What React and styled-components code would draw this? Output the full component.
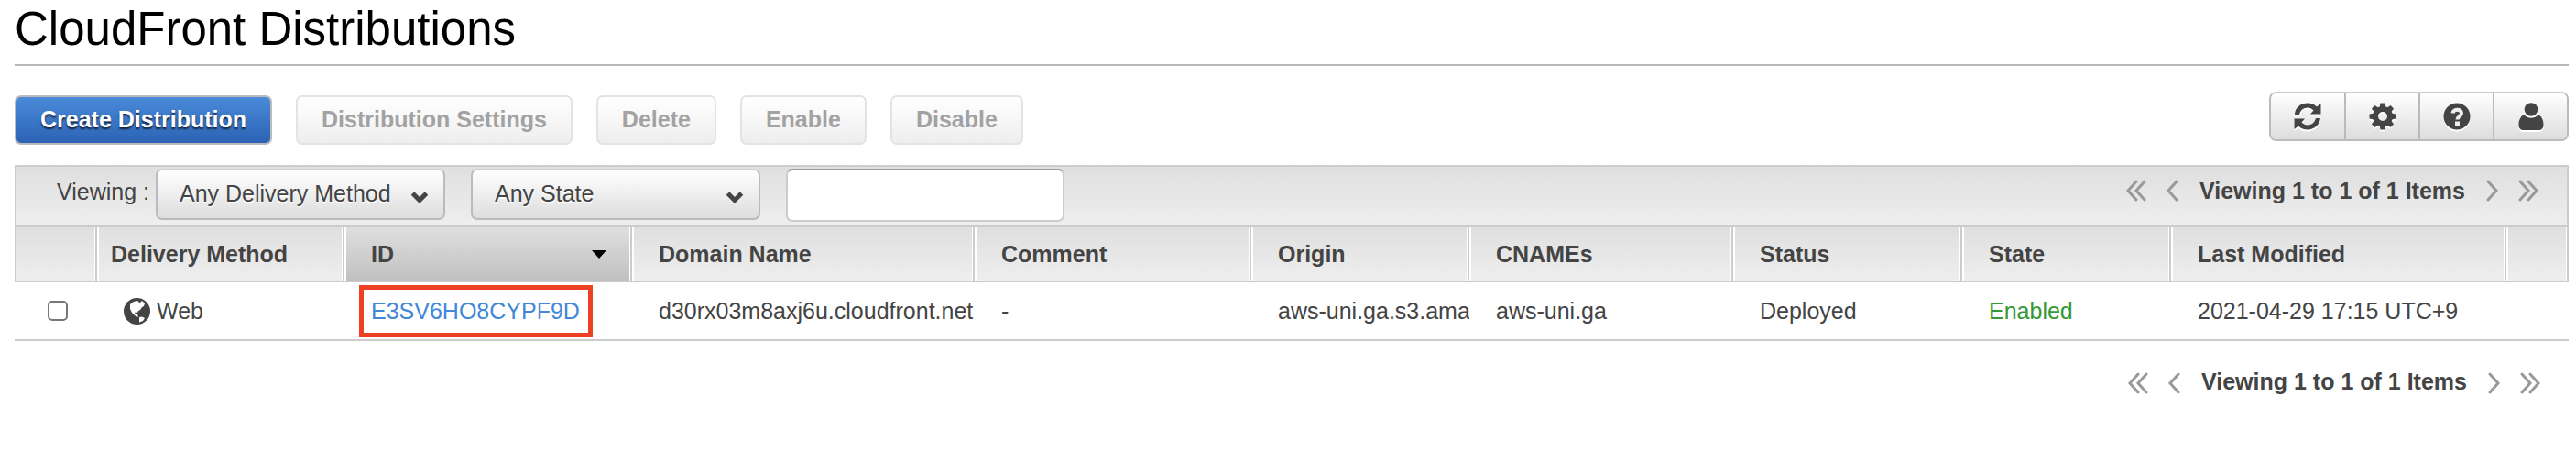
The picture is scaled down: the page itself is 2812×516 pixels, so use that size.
import React from "react";
import styled, { createGlobalStyle } from "styled-components";

const columns = [
  { key: "select", title: "", width: 90 },
  { key: "method", title: "Delivery Method", width: 270 },
  { key: "id", title: "ID", width: 314, sorted: true },
  { key: "domain", title: "Domain Name", width: 374 },
  { key: "comment", title: "Comment", width: 302 },
  { key: "origin", title: "Origin", width: 238 },
  { key: "cnames", title: "CNAMEs", width: 288 },
  { key: "status", title: "Status", width: 250 },
  { key: "state", title: "State", width: 228 },
  { key: "modified", title: "Last Modified", width: 366 },
  { key: "rest", title: "" },
];

const distributions = [
  {
    id: "E3SV6HO8CYPF9D",
    method: "Web",
    domain: "d30rx03m8axj6u.cloudfront.net",
    comment: "-",
    origin: "aws-uni.ga.s3.ama",
    cnames: "aws-uni.ga",
    status: "Deployed",
    state: "Enabled",
    modified: "2021-04-29 17:15 UTC+9",
  },
];

const RefreshIcon = () => (
  <Glyph viewBox="0 0 30 30" aria-hidden="true">
    <path d="M1 13C1 6 7 0.500 15 0.500C19 0.500 22.500 2 25 4.500L29.500 1V12.500H18L21.500 8.500C19.500 6.500 17.500 5.500 15 5.500C10.500 5.500 7 8.500 6 13Z" />
    <path d="M29 17C28 24.500 22 29.500 15 29.500C11 29.500 7.500 28 5 25.500L0.500 29V17.500H12L8.500 21.500C10.500 23.500 12.500 24.500 15 24.500C19.500 24.500 23 21.500 24 17Z" />
  </Glyph>
);

const GearIcon = () => (
  <Glyph viewBox="0 0 30 30" aria-hidden="true">
    {[0, 45, 90, 135, 180, 225, 270, 315].map((angle) => (
      <path key={angle} d="M11.500 6L12.500 0.500H17.500L18.500 6Z" transform={`rotate(${angle} 15 15)`} />
    ))}
    <circle cx="15" cy="15" r="8" fill="none" stroke="#444" strokeWidth="6" />
  </Glyph>
);

const HelpIcon = () => (
  <Glyph viewBox="0 0 30 30" aria-hidden="true">
    <circle cx="15" cy="15" r="14.500" />
    <path
      d="M10.500 11.500C11 6.500 20 6.500 20 11.500C20 14.500 15.500 15 15.500 18.500"
      fill="none"
      stroke="#eee"
      strokeWidth="4"
    />
    <path d="M13 20.500H18V25H13Z" fill="#eee" />
  </Glyph>
);

const UserIcon = () => (
  <Glyph viewBox="0 0 30 30" aria-hidden="true">
    <circle cx="15" cy="7.500" r="7.300" />
    <path d="M7.500 13.500C12 17.800 18 17.800 22.500 13.500C26 14 28.500 18.500 28.500 24C28.500 28 26.500 30 23 30H7C3.500 30 1.500 28 1.500 24C1.500 18.500 4 14 7.500 13.500Z" />
  </Glyph>
);

const GlobeIcon = () => (
  <Globe viewBox="0 0 29 29" aria-hidden="true">
    <circle cx="14.500" cy="14.500" r="14.500" />
    <path
      d="M7 7L10 4.500L14 3L17 4L15 6L18 5L20 3L23 6L22 9L20 10L18 13L16 14L15 16L13 15L12 17L15 18L16 21L12 19L9 16L7 12Z"
      fill="#fff"
    />
    <path d="M17 21L20 20.500L23 22L21 25L17 26.500Z" fill="#fff" />
  </Globe>
);

const Chevron = ({ flip, double }) => (
  <ChevronSvg viewBox={double ? "0 0 24 24" : "0 0 14 24"} $double={double} $flip={flip} aria-hidden="true">
    <path d="M12 2L3 12L12 22" />
    {double && <path d="M21 2L12 12L21 22" />}
  </ChevronSvg>
);

const Pagination = ({ bottom }) => (
  <Pager $bottom={bottom}>
    <PagerButton type="button" aria-label="First page" $bottom={bottom}>
      <Chevron double />
    </PagerButton>
    <PagerButton type="button" aria-label="Previous page" $bottom={bottom}>
      <Chevron />
    </PagerButton>
    <PagerText>Viewing 1 to 1 of 1 Items</PagerText>
    <PagerButton type="button" aria-label="Next page" $bottom={bottom}>
      <Chevron flip />
    </PagerButton>
    <PagerButton type="button" aria-label="Last page" $bottom={bottom}>
      <Chevron double flip />
    </PagerButton>
  </Pager>
);

const Dropdown = ({ label, value }) => (
  <SelectWrap>
    <Select aria-label={label} defaultValue={value}>
      <option>{value}</option>
    </Select>
    <SelectArrow viewBox="0 0 20 14" aria-hidden="true">
      <path d="M2.500 3L10 10.500L17.500 3" />
    </SelectArrow>
  </SelectWrap>
);

const App = () => {
  return (
    <Page>
      <GlobalStyle />
      <Title>CloudFront Distributions</Title>

      {/* action buttons */}
      <Toolbar>
        <Actions>
          <Button $primary>Create Distribution</Button>
          <Button disabled>Distribution Settings</Button>
          <Button disabled>Delete</Button>
          <Button disabled>Enable</Button>
          <Button disabled>Disable</Button>
        </Actions>
        <IconGroup>
          <IconButton aria-label="Refresh">
            <RefreshIcon />
          </IconButton>
          <IconButton aria-label="Settings">
            <GearIcon />
          </IconButton>
          <IconButton aria-label="Help">
            <HelpIcon />
          </IconButton>
          <IconButton aria-label="Account">
            <UserIcon />
          </IconButton>
        </IconGroup>
      </Toolbar>

      {/* filters */}
      <FilterBar>
        <FilterLabel htmlFor="search">Viewing :</FilterLabel>
        <Filters>
          <Dropdown label="Delivery method" value="Any Delivery Method" />
          <Dropdown label="State" value="Any State" />
          <SearchInput id="search" type="text" />
        </Filters>
        <Pagination />
      </FilterBar>

      {/* distribution list */}
      <Table>
        <colgroup>
          {columns.map((column) => (
            <Col key={column.key} $width={column.width} />
          ))}
        </colgroup>
        <thead>
          <tr>
            {columns.map((column) => (
              <HeadCell key={column.key} $sorted={column.sorted} $narrow={column.key === "method"}>
                <HeadContent>
                  {column.title}
                  {column.sorted && (
                    <SortArrow viewBox="0 0 16 9" aria-hidden="true">
                      <path d="M0 0H16L8 9Z" />
                    </SortArrow>
                  )}
                </HeadContent>
              </HeadCell>
            ))}
          </tr>
        </thead>
        <tbody>
          {distributions.map((item) => (
            <tr key={item.id}>
              <Cell>
                <Checkbox type="checkbox" aria-label={`Select ${item.id}`} />
              </Cell>
              <Cell>
                <Method>
                  <GlobeIcon />
                  {item.method}
                </Method>
              </Cell>
              <Cell>
                <IdLink href="#">{item.id}</IdLink>
              </Cell>
              <Cell>{item.domain}</Cell>
              <Cell>{item.comment}</Cell>
              <Cell>{item.origin}</Cell>
              <Cell>{item.cnames}</Cell>
              <Cell>{item.status}</Cell>
              <Cell $enabled>{item.state}</Cell>
              <Cell>{item.modified}</Cell>
              <Cell />
            </tr>
          ))}
        </tbody>
      </Table>
      <Pagination bottom />
    </Page>
  );
};

export default App;

/* styles */
const GlobalStyle = createGlobalStyle`
  * {
    box-sizing: border-box;
  }

  body {
    margin: 0;
    background: #fff;
    color: #444;
    font-family: "Liberation Sans", Arial, sans-serif;
    font-size: 25px;
    line-height: 30px;
  }

  button, input, select {
    margin: 0;
    font: inherit;
    color: inherit;
  }
`;

const Page = styled.main`
  padding: 0 8px 0 16px;
`;

const Title = styled.h1`
  margin: 0;
  padding: 2px 0 8px;
  border-bottom: 2px solid #b7b7b7;
  color: #000;
  font-size: 51px;
  font-weight: 400;
  line-height: 60px;
`;

const Toolbar = styled.div`
  display: flex;
  justify-content: space-between;
  align-items: flex-start;
  padding: 28px 0 22px;
`;

const Actions = styled.div`
  display: flex;
  gap: 26px;
  padding-top: 4px;
`;

const Button = styled.button`
  height: 54px;
  padding: 0 26px 2px;
  border: 2px solid ${(props) => (props.$primary ? "#bbb" : "#e3e3e3")};
  border-radius: 7px;
  background: ${(props) =>
    props.$primary ? "linear-gradient(#4a8ad9, #2c63b4)" : "linear-gradient(#fff, #eee)"};
  color: ${(props) => (props.$primary ? "#fff" : "#a2a2a2")};
  font-weight: 700;
  text-shadow: ${(props) => (props.$primary ? "0 2px 2px rgba(0, 0, 0, 0.7)" : "none")};
`;

const IconGroup = styled.div`
  display: flex;
  border: 2px solid #bbb;
  border-top-color: #ccc;
  border-radius: 8px;
  overflow: hidden;
`;

const IconButton = styled.button`
  display: flex;
  align-items: center;
  justify-content: center;
  width: 80px;
  height: 50px;
  padding: 0 0 1px;
  border: 0;
  background: linear-gradient(#fff, #ddd);

  & + & {
    width: 81px;
    border-left: 2px solid #bbb;
  }
`;

const Glyph = styled.svg`
  width: 30px;
  height: 30px;
  fill: #444;
  filter: drop-shadow(0 2px 0 #fff);
`;

const FilterBar = styled.div`
  display: flex;
  align-items: flex-start;
  height: 68px;
  padding-left: 44px;
  border: 2px solid #ccc;
  background: linear-gradient(#dfdfdf, #eee);
`;

const FilterLabel = styled.label`
  width: 108px;
  padding-top: 12px;
`;

const Filters = styled.div`
  display: flex;
  gap: 28px;
  padding-top: 2px;
`;

const SelectWrap = styled.div`
  position: relative;
  width: 316px;
`;

const Select = styled.select`
  appearance: none;
  width: 100%;
  height: 56px;
  padding: 0 24px 2px;
  border: 2px solid #bbb;
  border-top-color: #ccc;
  border-radius: 7px;
  background: linear-gradient(#fff, #ddd);
  text-shadow: 0 2px 0 #fff;
`;

const SelectArrow = styled.svg`
  position: absolute;
  top: 24px;
  right: 18px;
  width: 20px;
  height: 14px;
  fill: none;
  stroke: #444;
  stroke-width: 5;
  pointer-events: none;
`;

const SearchInput = styled.input`
  width: 304px;
  height: 58px;
  padding: 0 12px;
  border: 2px solid #ccc;
  border-top-color: #999;
  border-radius: 7px;
  background: #fff;
`;

const Pager = styled.div`
  display: flex;
  align-items: flex-start;
  justify-content: flex-end;
  gap: 20px;
  margin-left: auto;
  padding: ${(props) => (props.$bottom ? 29 : 11)}px 30px 0 0;
`;

const PagerButton = styled.button`
  display: flex;
  padding: ${(props) => (props.$bottom ? 5 : 3)}px 0 0;
  border: 0;
  background: none;
`;

const PagerText = styled.span`
  min-width: 296px;
  font-weight: 700;
  text-align: center;
`;

const ChevronSvg = styled.svg`
  width: ${(props) => (props.$double ? 24 : 14)}px;
  height: 24px;
  fill: none;
  stroke: #999;
  stroke-width: 3;
  stroke-linecap: round;
  transform: ${(props) => (props.$flip ? "scaleX(-1)" : "none")};
`;

const Table = styled.table`
  width: 100%;
  table-layout: fixed;
  border-collapse: separate;
  border-spacing: 0;
`;

const Col = styled.col`
  width: ${(props) => (props.$width ? `${props.$width}px` : "auto")};
`;

const HeadCell = styled.th`
  height: 60px;
  padding: 0 26px 0 ${(props) => (props.$narrow ? 15 : 29)}px;
  border-right: 2px solid #ccc;
  border-bottom: 2px solid #ccc;
  background: ${(props) =>
    props.$sorted ? "linear-gradient(#dfdfdf, #c0c0c0)" : "linear-gradient(#dfdfdf, #eee)"};
  box-shadow: inset 2px 0 #fff, inset -1px 0 #fff;
  font-weight: 700;
  text-align: left;
  white-space: nowrap;

  &:first-child {
    border-left: 2px solid #ccc;
    box-shadow: inset -1px 0 #fff;
  }
`;

const HeadContent = styled.div`
  display: flex;
  align-items: center;
  justify-content: space-between;
`;

const SortArrow = styled.svg`
  width: 16px;
  height: 9px;
  fill: #000;
`;

const Cell = styled.td`
  height: 64px;
  padding: 0 0 0 29px;
  border-bottom: 2px solid #ccc;
  color: ${(props) => (props.$enabled ? "#393" : "#444")};
  overflow: hidden;
  white-space: nowrap;

  &:first-child {
    padding-left: 36px;
  }
`;

const Checkbox = styled.input`
  appearance: none;
  display: block;
  width: 22px;
  height: 22px;
  border: 2px solid #777;
  border-radius: 5px;
  background: #fff;
`;

const Method = styled.span`
  display: flex;
  align-items: center;
  gap: 7px;
`;

const Globe = styled.svg`
  width: 29px;
  height: 29px;
  fill: #444;
`;

const IdLink = styled.a`
  position: relative;
  color: #4287d8;
  text-decoration: none;

  &::after {
    content: "";
    position: absolute;
    inset: -14px -14px -15px -13px;
    border: 5px solid #ee4023;
  }
`;
